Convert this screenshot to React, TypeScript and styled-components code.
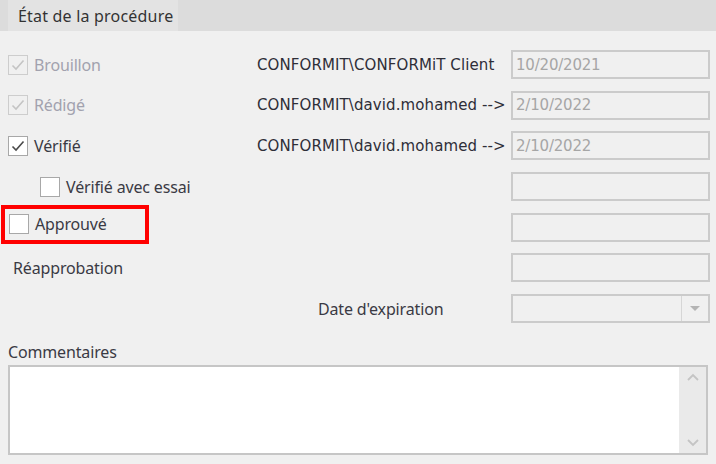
import React from "react";
import styled, { createGlobalStyle } from "styled-components";

const Global = createGlobalStyle`
  html, body { margin: 0; padding: 0; background: #f0f0f0; }
  body { font-family: "Noto Sans", "Open Sans", sans-serif; }
`;

const Page = styled.div`
  width: 716px;
  height: 464px;
  background: #f0f0f0;
  display: flex;
  flex-direction: column;
  overflow: hidden;
`;

const Header = styled.div`
  height: 31px;
  background: #dcdcdc;
  display: flex;
  padding-left: 8px;
`;

const Tab = styled.div`
  width: 170px;
  background: #e3e3e3;
  display: flex;
  align-items: center;
  padding-left: 10px;
  box-sizing: border-box;
  font-size: 16px;
  color: #333;
  letter-spacing: 0.2px;
`;

const Grid = styled.div`
  display: grid;
  grid-template-columns: 249px 254px 199px;
  grid-auto-rows: 29px;
  row-gap: 11.7px;
  padding: 19px 6px 0 8px;
`;

const Cell = styled.div<{ $indent?: number }>`
  display: flex;
  align-items: center;
  padding-left: ${(p) => p.$indent ?? 0}px;
  min-width: 0;
`;

const Highlight = styled.div`
  display: flex;
  align-items: center;
  height: 39px;
  margin: -6px 0 0 -7px;
  padding-left: 4px;
  width: 148px;
  box-sizing: border-box;
  border: 4px solid #ff0000;
`;

const Box = styled.span<{ $disabled?: boolean }>`
  width: 20px;
  height: 20px;
  box-sizing: border-box;
  border: 1.5px solid ${(p) => (p.$disabled ? "#cdcdcd" : "#a8a8a8")};
  background: ${(p) => (p.$disabled ? "#f0f0f0" : "#ffffff")};
  display: inline-flex;
  align-items: center;
  justify-content: center;
  flex: none;
`;

const Label = styled.span<{ $disabled?: boolean; $gap?: number }>`
  font-size: 16px;
  color: ${(p) => (p.$disabled ? "#a2a2ae" : "#3a3a44")};
  margin-left: ${(p) => p.$gap ?? 6}px;
  white-space: nowrap;
  letter-spacing: -0.15px;
`;

const User = styled.span`
  font-family: "DejaVu Sans", sans-serif;
  font-size: 15px;
  color: #2e2e38;
  white-space: nowrap;
  letter-spacing: 0.1px;
`;

const Field = styled.div`
  height: 29px;
  box-sizing: border-box;
  border: 2px solid #cbcbcb;
  background: #f0f0f0;
  display: flex;
  align-items: center;
  padding-left: 3px;
  font-family: "DejaVu Sans", sans-serif;
  font-size: 15px;
  letter-spacing: -0.2px;
  color: #a6a6a6;
`;

const Combo = styled(Field)`
  padding-left: 0;
  justify-content: flex-end;
`;

const ComboButton = styled.div`
  width: 26px;
  height: 100%;
  border-left: 1.5px solid #d6d6d6;
  display: flex;
  align-items: center;
  justify-content: center;
`;

const CommentsLabel = styled.div`
  margin: 18px 0 0 8px;
  font-size: 16px;
  color: #3a3a44;
  letter-spacing: -0.15px;
  height: 23px;
  line-height: 23px;
`;

const TextArea = styled.div`
  margin: 1px 8px 0 8px;
  height: 90px;
  box-sizing: border-box;
  border: 2px solid #c6c6c6;
  background: #ffffff;
  display: flex;
  justify-content: flex-end;
`;

const ScrollBar = styled.div`
  width: 27px;
  background: #eaeaea;
  display: flex;
  flex-direction: column;
  justify-content: space-between;
  align-items: center;
  padding: 6px 0 6px;
`;

const Check = ({ color }: { color: string }) => (
  <svg width="14" height="12" viewBox="0 0 14 12">
    <path d="M1.5 6.5 L5 10 L12.5 1.5" fill="none" stroke={color} strokeWidth="1.6" />
  </svg>
);

const CheckBox = ({ checked, disabled }: { checked?: boolean; disabled?: boolean }) => (
  <Box $disabled={disabled}>{checked && <Check color={disabled ? "#c4c4c4" : "#4a4a4a"} />}</Box>
);

const Chevron = ({ up }: { up?: boolean }) => (
  <svg width="12" height="8" viewBox="0 0 12 8">
    <path d={up ? "M1 7 L6 2 L11 7" : "M1 1 L6 6 L11 1"} fill="none" stroke="#c4c4c4" strokeWidth="1.8" />
  </svg>
);

export default function App() {
  return (
    <Page>
      <Global />
      <Header>
        <Tab>État de la procédure</Tab>
      </Header>
      <Grid>
        <Cell>
          <CheckBox checked disabled />
          <Label $disabled>Brouillon</Label>
        </Cell>
        <Cell>
          <User>CONFORMIT\CONFORMiT Client</User>
        </Cell>
        <Field>10/20/2021</Field>

        <Cell>
          <CheckBox checked disabled />
          <Label $disabled>Rédigé</Label>
        </Cell>
        <Cell>
          <User>CONFORMIT\david.mohamed --&gt;</User>
        </Cell>
        <Field>2/10/2022</Field>

        <Cell>
          <CheckBox checked />
          <Label>Vérifié</Label>
        </Cell>
        <Cell>
          <User>CONFORMIT\david.mohamed --&gt;</User>
        </Cell>
        <Field>2/10/2022</Field>

        <Cell $indent={32}>
          <CheckBox />
          <Label>Vérifié avec essai</Label>
        </Cell>
        <Cell />
        <Field />

        <Cell>
          <Highlight>
            <CheckBox />
            <Label>Approuvé</Label>
          </Highlight>
        </Cell>
        <Cell />
        <Field />

        <Cell $indent={5}>
          <Label $gap={0}>Réapprobation</Label>
        </Cell>
        <Cell />
        <Field />

        <Cell />
        <Cell $indent={61}>
          <Label $gap={0}>Date d'expiration</Label>
        </Cell>
        <Combo>
          <ComboButton>
            <svg width="10" height="6" viewBox="0 0 10 6">
              <path d="M0 0 L10 0 L5 5 Z" fill="#b4b4b4" />
            </svg>
          </ComboButton>
        </Combo>
      </Grid>
      <CommentsLabel>Commentaires</CommentsLabel>
      <TextArea>
        <ScrollBar>
          <Chevron up />
          <Chevron />
        </ScrollBar>
      </TextArea>
    </Page>
  );
}
